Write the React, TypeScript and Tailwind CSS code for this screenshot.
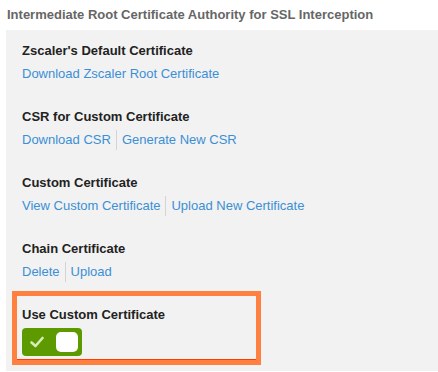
import React from "react";

const Sep = () => <span className="mx-[5px] h-[20px] w-px bg-[#d4d4d4]" />;

function Section({ title, links, mb }: { title: string; links: string[]; mb?: string }) {
  return (
    <div className={mb ?? "mb-[23px]"}>
      <div className="text-[13px] font-bold leading-[20px] text-[#222]">{title}</div>
      <div className="mt-[3px] flex items-center text-[13px] leading-[20px] text-[#3b8fd5]">
        {links.map((l, i) => (
          <React.Fragment key={l}>
            {i > 0 && <Sep />}
            <span>{l}</span>
          </React.Fragment>
        ))}
      </div>
    </div>
  );
}

export default function App() {
  return (
    <div className="h-[372px] w-[438px] bg-white" style={{ fontFamily: '"Liberation Sans", Arial, sans-serif' }}>
      <div className="px-[7px] pt-[5px] text-[13px] font-bold leading-[20px] text-[#666]">
        Intermediate Root Certificate Authority for SSL Interception
      </div>
      <div className="ml-[6px] mt-[5px] bg-[#f2f2f2] pt-[11px] pb-[6px]">
        <div className="pl-[16px]">
          <Section title="Zscaler's Default Certificate" links={["Download Zscaler Root Certificate"]} />
          <Section title="CSR for Custom Certificate" links={["Download CSR", "Generate New CSR"]} />
          <Section title="Custom Certificate" links={["View Custom Certificate", "Upload New Certificate"]} />
          <Section title="Chain Certificate" links={["Delete", "Upload"]} mb="mb-[9px]" />
        </div>
        <div className="ml-[6px] w-[249px] border-[5px] border-[#ff8142] pl-[5px] pt-[9px] pb-[4px] shadow-[inset_0_-1px_0_#ff3b00]">
          <div className="text-[13px] font-bold leading-[20px] text-[#222]">Use Custom Certificate</div>
          <div className="mt-[3px] flex h-[28px] w-[60px] items-center rounded-[4px] bg-[#5c9a00] pl-[8px] pr-[4px]">
            <svg width="14" height="12" viewBox="0 0 14 12">
              <path d="M1.5 6.5 L5.5 10 L12.5 2" fill="none" stroke="#d9ecb8" strokeWidth="2.6" strokeLinecap="round" strokeLinejoin="round" />
            </svg>
            <div className="ml-auto h-[20px] w-[22px] rounded-[5px] bg-white" />
          </div>
        </div>
      </div>
    </div>
  );
}
